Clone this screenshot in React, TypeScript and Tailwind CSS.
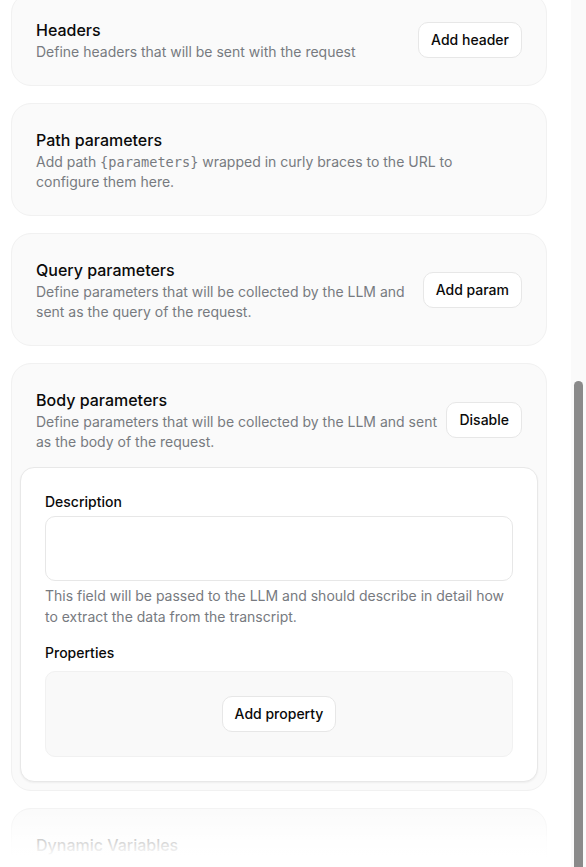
import type { ReactNode } from "react";

const font = { fontFamily: "Inter, 'Noto Sans', sans-serif" };

const Button = ({ children }: { children: ReactNode }) => (
  <button className="h-9 shrink-0 rounded-[10px] border border-[#e7e7e7] bg-white px-3 text-sm font-medium text-[#0a0a0a]">
    {children}
  </button>
);

const Section = ({
  title,
  description,
  action,
  narrow,
  children,
}: {
  title: string;
  description?: ReactNode;
  action?: ReactNode;
  narrow?: boolean;
  children?: ReactNode;
}) => (
  <div className="rounded-[20px] border border-[#f1f1f1] bg-[#fafafa] px-2 py-2">
    <div className="flex items-center gap-2 px-4 pt-4 pb-[15px]">
      <div className="min-w-0 flex-1">
        <h3 className="text-base font-medium leading-6 text-[#0a0a0a]">{title}</h3>
        {description && (
          <p className={`text-sm leading-5 text-[#777a80] ${narrow ? "max-w-[430px]" : ""}`}>{description}</p>
        )}
      </div>
      {action}
    </div>
    {children}
  </div>
);

export default function App() {
  return (
    <div style={font} className="flex h-[867px] w-[586px] overflow-hidden bg-white">
      <div className="relative flex-1 overflow-hidden">
        <div className="-mt-[7px] flex flex-col gap-[17px] pl-[11px] pr-6">
          <Section
            title="Headers"
            description="Define headers that will be sent with the request"
            action={<Button>Add header</Button>}
          />
          <Section
            title="Path parameters"
            narrow
            description={
              <>
                Add path{" "}
                <span className="text-[13.6px] leading-none" style={{ fontFamily: "'DejaVu Sans Mono', monospace" }}>
                  {"{parameters}"}
                </span>{" "}
                wrapped in curly braces to the URL to configure them here.
              </>
            }
          />
          <Section
            title="Query parameters"
            description="Define parameters that will be collected by the LLM and sent as the query of the request."
            action={<Button>Add param</Button>}
          />
          <Section
            title="Body parameters"
            description="Define parameters that will be collected by the LLM and sent as the body of the request."
            action={<Button>Disable</Button>}
          >
            <div className="rounded-[14px] border border-[#e8e8e8] bg-white p-6 shadow-[0_1px_2px_rgba(0,0,0,0.05)]">
              <label className="block text-sm font-medium leading-5 text-[#0a0a0a]">Description</label>
              <textarea className="mt-1 block h-[65px] w-full resize-none rounded-[10px] border border-[#e7e7e7] bg-white" />
              <p className="mt-1 text-sm leading-[21px] text-[#777a80]">
                This field will be passed to the LLM and should describe in detail how to extract the data from the
                transcript.
              </p>
              <label className="mt-4 block text-sm font-medium leading-5 text-[#0a0a0a]">Properties</label>
              <div className="mt-2 flex justify-center rounded-[10px] border border-[#f1f1f1] bg-[#f9f9f9] p-6">
                <Button>Add property</Button>
              </div>
            </div>
          </Section>
          <Section title="Dynamic Variables" />
        </div>
        {/* fade at the bottom of the scroll area */}
        <div className="pointer-events-none absolute inset-x-0 bottom-0 h-[66px] bg-[linear-gradient(to_bottom,rgba(255,255,255,0)_0%,rgba(255,255,255,0.82)_60%,#fff_85%)]" />
      </div>

      {/* scrollbar */}
      <div className="flex w-[15px] flex-col bg-[#fafafa] pt-[381px]">
        <div className="ml-[3px] w-[9px] flex-1 rounded-t-full bg-[#8a8a8a]" />
      </div>
    </div>
  );
}
